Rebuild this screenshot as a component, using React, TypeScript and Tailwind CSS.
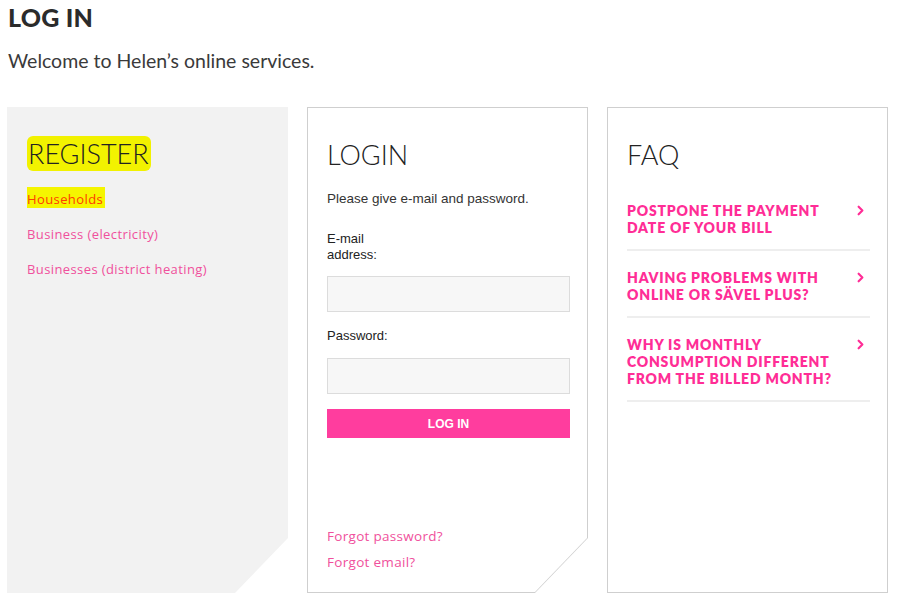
import { ChevronRight } from "lucide-react"

const faqs = [
  ["POSTPONE THE PAYMENT", "DATE OF YOUR BILL"],
  ["HAVING PROBLEMS WITH", "ONLINE OR SÄVEL PLUS?"],
  ["WHY IS MONTHLY", "CONSUMPTION DIFFERENT", "FROM THE BILLED MONTH?"],
]

export default function App() {
  return (
    <div className="w-[900px] h-[605px] bg-white overflow-hidden font-['Lato',sans-serif] text-[#333]">
      <div className="pl-[8px] pt-[2px]">
        <h1 className="text-[25px] leading-[30px] font-black text-[#2b2b2b] tracking-[0.2px]">LOG IN</h1>
        <p className="mt-[17px] text-[19.5px] leading-[24px] text-[#3a3a3a]">Welcome to Helen’s online services.</p>
      </div>

      <div className="flex gap-[19px] pl-[7px] mt-[34px]">
        {/* register */}
        <div className="w-[281px] h-[486px] bg-[#f2f2f2] pl-[20px] pt-[30px] [clip-path:polygon(0_0,100%_0,100%_calc(100%-55px),calc(100%-53px)_100%,0_100%)]">
          <h2 className="text-[27px] leading-[34px] font-light text-[#222]">
            <span className="bg-[#f2f200] rounded-[6px] pl-[1px] pr-[2px] py-[1px]">REGISTER</span>
          </h2>
          <div className="mt-[16px] flex flex-col gap-[17px] font-['Open_Sans',sans-serif] text-[13px] leading-[18px] tracking-[0.4px]">
            <span className="self-start bg-[#f5f500] text-[#ff3c00] pr-[2px] pt-[3px]">Households</span>
            <a className="text-[#f0509c]">Business (electricity)</a>
            <a className="text-[#f0509c]">Businesses (district heating)</a>
          </div>
        </div>

        {/* login */}
        <div className="w-[281px] h-[486px] bg-[#cfcfcf] p-px [clip-path:polygon(0_0,100%_0,100%_calc(100%-55px),calc(100%-53px)_100%,0_100%)]">
          <div className="h-full bg-white pl-[19px] pr-[17px] pt-[30px] flex flex-col [clip-path:polygon(0_0,100%_0,100%_calc(100%-54px),calc(100%-52px)_100%,0_100%)]">
            <h2 className="text-[27px] leading-[34px] font-light text-[#222]">LOGIN</h2>
            <p className="mt-[19px] font-['Liberation_Sans',Arial,sans-serif] text-[13.5px] leading-[16px] text-[#333]">Please give e-mail and password.</p>
            <label className="mt-[24px] w-[60px] font-['Liberation_Sans',Arial,sans-serif] text-[13px] leading-[16px] text-[#222]">E-mail address:</label>
            <input className="mt-[13px] h-[36px] bg-[#f7f7f7] border border-[#dcdcdc] outline-none" />
            <label className="mt-[16px] font-['Liberation_Sans',Arial,sans-serif] text-[13px] leading-[16px] text-[#222]">Password:</label>
            <input type="password" className="mt-[14px] h-[36px] bg-[#f7f7f7] border border-[#dcdcdc] outline-none" />
            <button className="mt-[15px] h-[29px] bg-[#ff3d9e] text-white font-['Liberation_Sans',Arial,sans-serif] font-bold text-[12px]">LOG IN</button>
            <div className="mt-auto mb-[21px] flex flex-col gap-[8px] font-['Open_Sans',sans-serif] text-[13.5px] leading-[18px] tracking-[0.3px] text-[#f0509c]">
              <a>Forgot password?</a>
              <a>Forgot email?</a>
            </div>
          </div>
        </div>

        {/* faq */}
        <div className="w-[281px] h-[486px] border border-[#cfcfcf] pl-[19px] pr-[17px] pt-[30px]">
          <h2 className="text-[27px] leading-[34px] font-light text-[#222]">FAQ</h2>
          <div className="mt-[30px] flex flex-col">
            {faqs.map((lines, i) => (
              <div key={i} className="flex justify-between border-b-2 border-[#eeeeee] pb-[13px] mb-[18px]">
                <div className="text-[14px] leading-[17px] font-extrabold text-[#ff2d96] tracking-[0.8px]">
                  {lines.map((l) => (
                    <div key={l}>{l}</div>
                  ))}
                </div>
                <ChevronRight className="w-[15px] h-[15px] text-[#ff2d96] mt-px mr-[2px]" strokeWidth={3.5} />
              </div>
            ))}
          </div>
        </div>
      </div>
    </div>
  )
}
